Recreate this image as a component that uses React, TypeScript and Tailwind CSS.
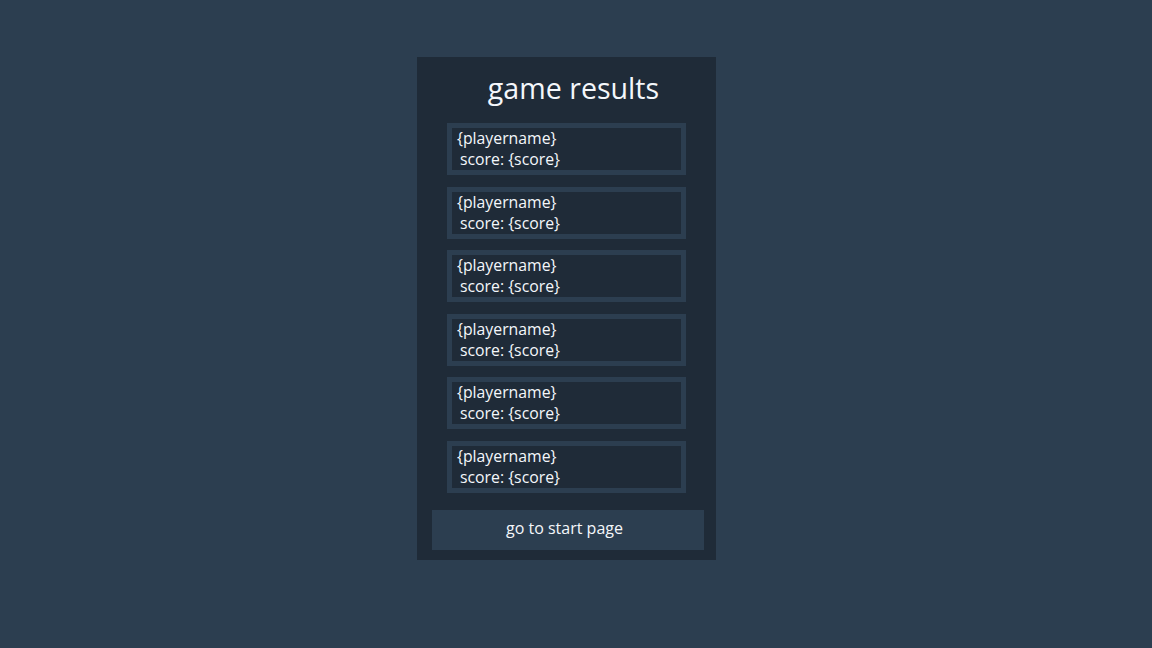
import React from "react";

const cards = [0, 1, 2, 3, 4, 5];

export default function App() {
  return (
    <div
      className="min-h-screen w-full bg-[#2c3e50] flex justify-center pr-[19px] pt-[57px]"
      style={{ fontFamily: '"Open Sans", "Noto Sans", sans-serif' }}
    >
      <div className="w-[299px] h-[503px] bg-[#1f2b38] flex flex-col">
        <h1 className="h-[66px] pl-[14px] pt-[12px] text-center text-[28.6px] leading-[38px] text-[#f4f7fb] font-normal">
          game results
        </h1>
        <div className="flex flex-col pl-[30px]">
          {cards.map((i) => (
            <div
              key={i}
              className="w-[239px] h-[52px] border-[5px] border-[#2c3e50] mb-[11.6px] pl-[5px] text-[15.8px] leading-[21px] text-[#f4f7fb]"
            >
              <div>{"{playername}"}</div>
              <div className="pl-[3px]">score: {"{score}"}</div>
            </div>
          ))}
        </div>
        <button className="mt-[5.4px] ml-[15px] w-[272px] h-[40px] bg-[#2c3e50] text-[16px] text-[#f4f7fb] pr-[7px] pb-[3px]">
          go to start page
        </button>
      </div>
    </div>
  );
}
